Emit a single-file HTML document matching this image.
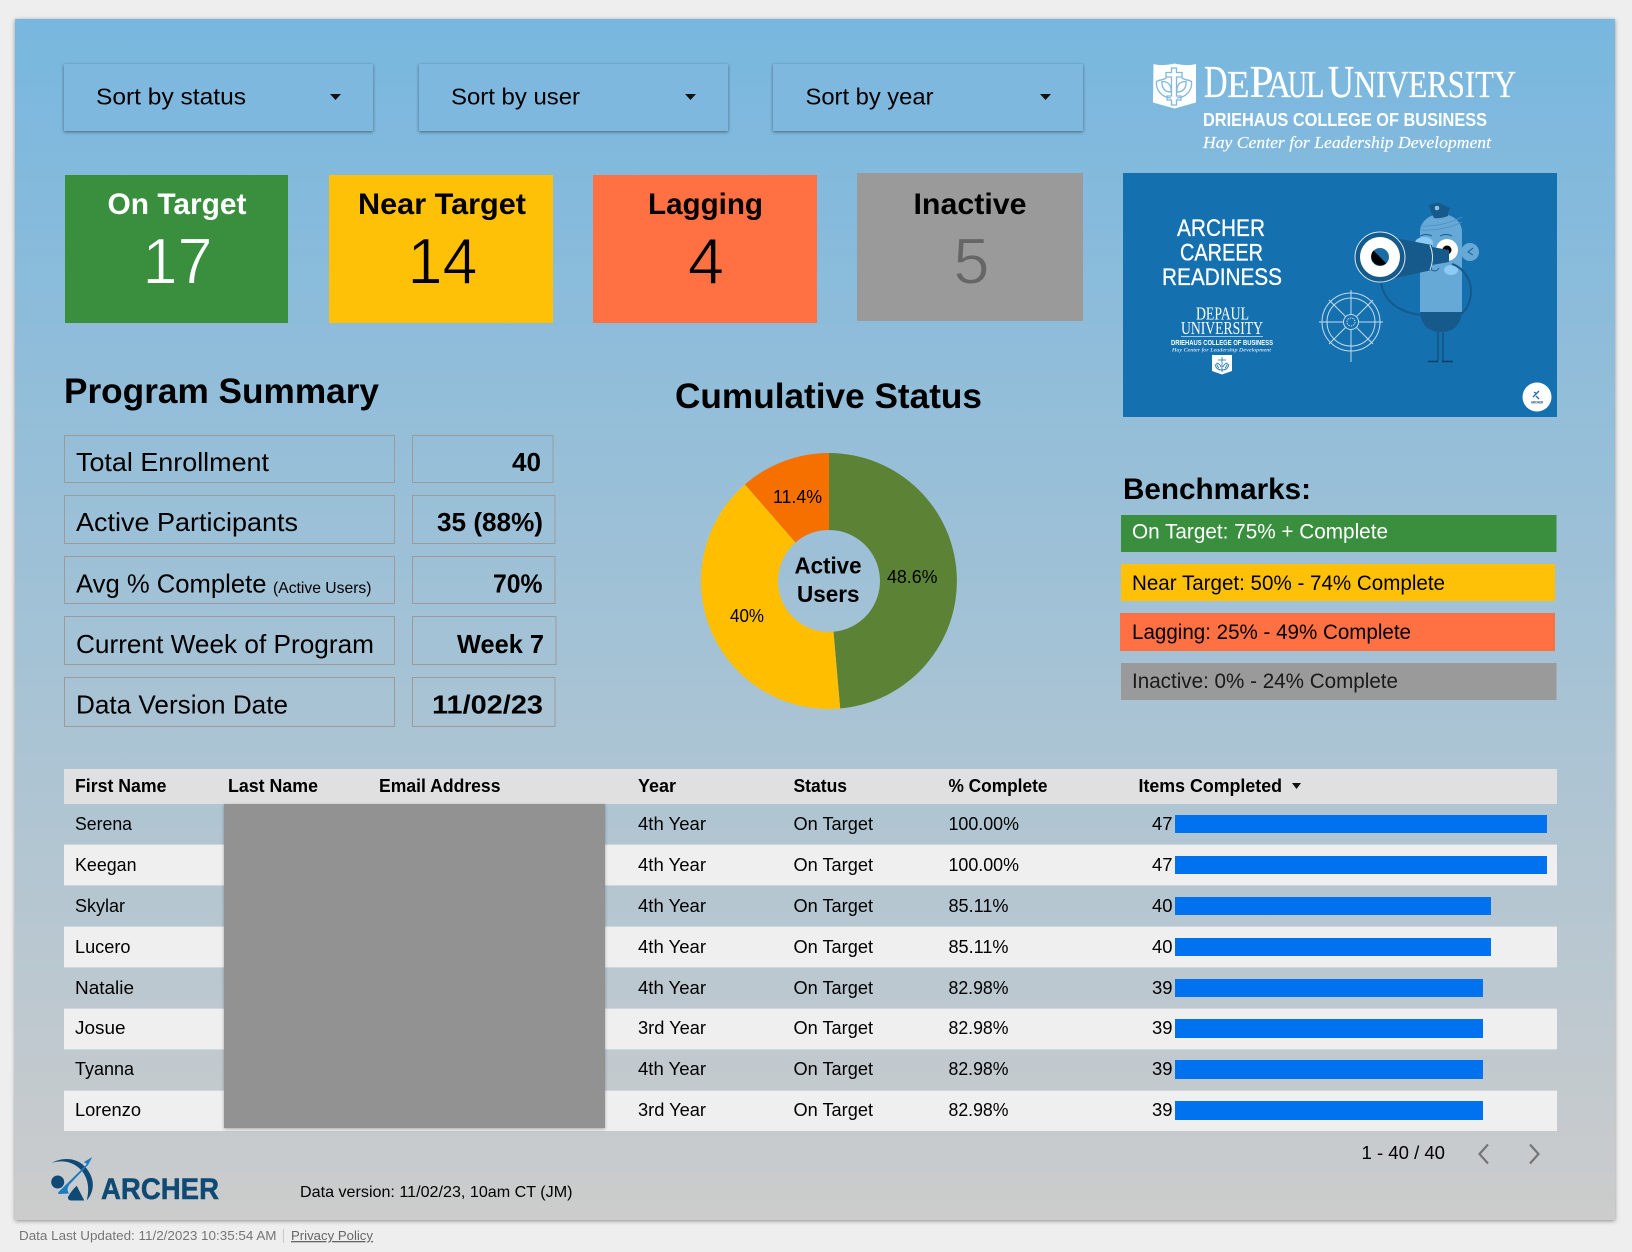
<!DOCTYPE html>
<html lang="en"><head><meta charset="utf-8"><title>Archer Career Readiness Dashboard</title>
<style>
html,body{margin:0;padding:0;background:#eee;width:1632px;height:1252px;overflow:hidden}
svg{display:block;position:absolute;left:0;top:0}
text{font-family:"Liberation Sans",Arial,sans-serif;fill:#000}
.b{font-weight:700}
.dd{font-size:23px}
.ct{font-size:30px;font-weight:700}
.cn{font-size:65px;text-anchor:middle;stroke-width:1px}
.l{font-size:26px}.v{font-size:26px;font-weight:700}
.h{font-size:18px;font-weight:700}.t{font-size:18px}
.bm{font-size:21px}
.s{font-family:"Liberation Serif",serif;fill:#fff}
.w{fill:#fff}
.lg{font-family:"Liberation Serif",serif;fill:#fff;stroke:#fff;stroke-width:.3px}
</style></head><body>
<svg width="1632" height="1252" viewBox="0 0 1632 1252" xmlns="http://www.w3.org/2000/svg">
<defs><linearGradient id="g" x1="0" y1="0" x2="0" y2="1"><stop offset="0" stop-color="#78b7df"/><stop offset="1" stop-color="#cccccc"/></linearGradient></defs>
<rect x="15" y="19" width="1600" height="1201" fill="url(#g)" style="filter:drop-shadow(0 1px 2px rgba(0,0,0,.4))"/>

<!-- dropdowns -->
<g fill="#7fb8de" style="filter:drop-shadow(0 1px 1.5px rgba(0,0,0,.45))">
<rect x="64" y="64" width="309" height="67"/><rect x="419" y="64" width="309" height="67"/><rect x="773" y="64" width="310" height="67"/>
</g>
<text class="dd" x="96" y="104.700" textLength="150" lengthAdjust="spacingAndGlyphs">Sort by status</text>
<text class="dd" x="451" y="104.700" textLength="129" lengthAdjust="spacingAndGlyphs">Sort by user</text>
<text class="dd" x="805.500" y="104.700" textLength="128" lengthAdjust="spacingAndGlyphs">Sort by year</text>
<path d="M330 94h11l-5.500 6zM685 94h11l-5.500 6zM1040 94h11l-5.500 6z" fill="#111"/>

<!-- DePaul logo -->
<path d="M1153.500 64q5 1.500 11 1t10-1.500q4 1 10 1.500t11.500-1v38.500l-21.500 6-21.500-6z" fill="#fff"/>
<g fill="none" stroke="#80b9de" stroke-width="1.300">
<path d="M1171.500 68h5v4.500h5.500v4.500h-5.500v19h4.500v4h-4.500v5h-5v-5h-4.500v-4h4.500v-19h-5.500v-4.500h5.500z"/>
<path d="M1171 92c-7 0-9.500-5-9-10.500 6 0 10 3.500 9 10.500zM1177 92c7 0 9.500-5 9-10.500-6 0-10 3.500-9 10.500z"/>
<path d="M1166.500 78c-3 1-5 2.500-6.500 2l-3.500 1.500c-1 8 5 16 14.500 16.500M1181.500 78c3 1 5 2.500 6.500 2l3.500 1.500c1 8-5 16-14.500 16.500"/>
</g>
<text class="lg" x="1204" y="97" font-size="45" textLength="23.500" lengthAdjust="spacingAndGlyphs">D</text>
<text class="lg" x="1227" y="97" font-size="38" textLength="22.500" lengthAdjust="spacingAndGlyphs">E</text>
<text class="lg" x="1249.500" y="97" font-size="45" textLength="24" lengthAdjust="spacingAndGlyphs">P</text>
<text class="lg" x="1267" y="97" font-size="38" textLength="24" lengthAdjust="spacingAndGlyphs">A</text>
<text class="lg" x="1288" y="97" font-size="38" textLength="19" lengthAdjust="spacingAndGlyphs">U</text>
<text class="lg" x="1306" y="97" font-size="38" textLength="18.500" lengthAdjust="spacingAndGlyphs">L</text>
<text class="lg" x="1328" y="97" font-size="45" textLength="26" lengthAdjust="spacingAndGlyphs">U</text>
<text class="lg" x="1354" y="97" font-size="38" textLength="162" lengthAdjust="spacingAndGlyphs">NIVERSITY</text>
<text class="w b" x="1203" y="126" font-size="18" textLength="284" lengthAdjust="spacingAndGlyphs">DRIEHAUS COLLEGE OF BUSINESS</text>
<text class="lg" x="1203" y="148" font-size="16.500" font-style="italic" textLength="288" lengthAdjust="spacingAndGlyphs" style="stroke-width:.15px">Hay Center for Leadership Development</text>

<!-- status cards -->
<rect x="65" y="175" width="223" height="148" fill="#3a8f3f"/>
<rect x="329" y="175" width="224" height="148" fill="#ffc107"/>
<rect x="593" y="175" width="224" height="148" fill="#ff7043"/>
<rect x="857" y="173" width="226" height="148" fill="#9a9a9a"/>
<text class="ct w" x="107.500" y="214" textLength="139" lengthAdjust="spacingAndGlyphs">On Target</text>
<text class="ct" x="358" y="214" textLength="168" lengthAdjust="spacingAndGlyphs">Near Target</text>
<text class="ct" x="648" y="214" textLength="115" lengthAdjust="spacingAndGlyphs">Lagging</text>
<text class="ct" x="913.500" y="214" textLength="113" lengthAdjust="spacingAndGlyphs">Inactive</text>
<text class="cn" x="177.500" y="283.500" textLength="70" lengthAdjust="spacingAndGlyphs" style="fill:#fff;stroke:#3a8f3f">17</text>
<text class="cn" x="442.500" y="283.500" textLength="70" lengthAdjust="spacingAndGlyphs" style="stroke:#ffc107">14</text>
<text class="cn" x="706" y="283.500" style="stroke:#ff7043">4</text>
<text class="cn" x="971.500" y="283.500" style="fill:#666;stroke:#9a9a9a">5</text>

<!-- banner -->
<rect x="1123" y="173" width="434" height="244" fill="#1570b0"/>
<g style="stroke:#fff;stroke-width:.3px">
<text class="w" x="1177" y="236" font-size="24" textLength="88" lengthAdjust="spacingAndGlyphs">ARCHER</text>
<text class="w" x="1180" y="260.500" font-size="24" textLength="83" lengthAdjust="spacingAndGlyphs">CAREER</text>
<text class="w" x="1162" y="285" font-size="24" textLength="120" lengthAdjust="spacingAndGlyphs">READINESS</text>
</g>
<text class="s" x="1196" y="319.500" font-size="18" textLength="53" lengthAdjust="spacingAndGlyphs">DEPAUL</text>
<text class="s" x="1181" y="334" font-size="18" textLength="82" lengthAdjust="spacingAndGlyphs">UNIVERSITY</text>
<path d="M1181 336.500h82" stroke="#cfe2ef" stroke-width=".7"/>
<text class="w b" x="1171" y="345" font-size="7" textLength="102" lengthAdjust="spacingAndGlyphs">DRIEHAUS COLLEGE OF BUSINESS</text>
<text class="s" x="1172" y="351.500" font-size="5.500" font-style="italic" textLength="99" lengthAdjust="spacingAndGlyphs">Hay Center for Leadership Development</text>
<path d="M1212 355h20v16l-10 3.500-10-3.500z" fill="#fff"/>
<path d="M1222 357v15M1218 360h8M1215 364q1 6 7 6t7-6M1219 368q-3-3-2-5 3 1 4 4M1225 368q3-3 2-5-3 1-4 4" fill="none" stroke="#1570b0" stroke-width=".8"/>
<circle cx="1537" cy="397" r="14.500" fill="#fff"/>
<path d="M1533 397l6-6M1534 392l3 2M1536 396l3 3" stroke="#1a6aa8" stroke-width="1.300" fill="none"/>
<text x="1531" y="403.500" font-size="3.500" textLength="12" lengthAdjust="spacingAndGlyphs" style="fill:#0f4a75;font-weight:700">ARCHER</text>

<!-- wheel -->
<g fill="none" stroke="#c3dbec" stroke-width="1">
<circle cx="1351" cy="322" r="29"/><circle cx="1351" cy="322" r="24"/><circle cx="1351" cy="322" r="7.500"/><circle cx="1351" cy="322" r="4" stroke-dasharray="1.500 1"/>
<path d="M1351 290v24.500M1351 329.500v32.500M1319 322h24.500M1358.500 322h24.500M1329 300l16.500 16.500M1356.500 327.500l16.500 16.500M1373 300l-16.500 16.500M1345.500 327.500l-16.500 16.500"/>
</g>
<!-- character -->
<path d="M1420 312V232C1420 221 1430 214 1441 214S1462 221 1462 232V312Z" fill="#67a9d6"/>
<path d="M1420 312h42q-2 20-21 20t-21-20z" fill="#155a8a"/>
<circle cx="1470" cy="252" r="9" fill="#67a9d6"/>
<path d="M1473 248l-5 4 5 3" fill="none" stroke="#155a8a" stroke-width="1"/>
<path d="M1429 205l9-2.500 12 5.500-2 5v3q-8 3-14 2l-3-6z" fill="#155a8a"/><circle cx="1437" cy="208" r="2.300" fill="#8fc2e4"/>
<path d="M1420 226q22 1 42-9M1421 230q22 1 41-8" fill="none" stroke="#4f92c2" stroke-width=".7"/>
<ellipse cx="1424" cy="243" rx="9" ry="6" fill="#8ccbf3"/><ellipse cx="1451" cy="270" rx="7" ry="5" fill="#8ccbf3"/>
<circle cx="1447" cy="250" r="11" fill="#fff"/><circle cx="1447" cy="250" r="4.500" fill="#000"/>
<path d="M1430 268q5 6 9 0M1420 236q6-3 12 0M1440 236q6-3 12 0" fill="none" stroke="#155a8a" stroke-width=".9"/>
<path d="M1381 283Q1386 310 1420 315M1452 264C1470 270 1479 295 1462 314" fill="none" stroke="#155a8a" stroke-width="2"/>
<path d="M1395 238l37 7v25l-37 8z" fill="#155a8a"/>
<path d="M1432 247l17 3v12l-17 3z" fill="#155a8a"/>
<path d="M1430 245q5 12 0 25" fill="none" stroke="#d9e9f4" stroke-width="1"/>
<circle cx="1380" cy="257" r="25" fill="#155a8a" stroke="#d9e9f4" stroke-width="1"/>
<circle cx="1380" cy="257" r="20" fill="#fff"/>
<circle cx="1380" cy="257" r="9" fill="#1c6ca4"/>
<path d="M1373.500 250.500a9 9 0 0 0 12.700 12.700z" fill="#000"/>
<path d="M1438 332v29M1443 332v29" stroke="#155a8a" stroke-width="2"/>
<path d="M1428 361.500h10M1442 361.500h11" stroke="#0c3c60" stroke-width="1.600"/>

<!-- Program Summary -->
<text class="b" x="64" y="403" font-size="35" textLength="315" lengthAdjust="spacingAndGlyphs">Program Summary</text>
<g fill="none" stroke="#9b9b9b" stroke-width="1">
<rect x="64.500" y="435.500" width="330" height="47"/><rect x="64.500" y="495.500" width="330" height="48"/><rect x="64.500" y="556.500" width="330" height="47"/><rect x="64.500" y="616.500" width="330" height="48"/><rect x="64.500" y="677.500" width="330" height="49"/>
<rect x="412.500" y="435.500" width="140.500" height="47"/><rect x="412.500" y="495.500" width="142.500" height="48"/><rect x="412.500" y="556.500" width="142.500" height="47"/><rect x="412.500" y="616.500" width="143.500" height="48"/><rect x="412.500" y="677.500" width="142.500" height="49"/>
</g>
<text class="l" x="76" y="471" textLength="193" lengthAdjust="spacingAndGlyphs">Total Enrollment</text>
<text class="l" x="76" y="531" textLength="222" lengthAdjust="spacingAndGlyphs">Active Participants</text>
<text class="l" x="76" y="592.700" textLength="190.500" lengthAdjust="spacingAndGlyphs">Avg % Complete</text>
<text x="273" y="593" font-size="16" textLength="98.500" lengthAdjust="spacingAndGlyphs">(Active Users)</text>
<text class="l" x="76" y="653" textLength="298" lengthAdjust="spacingAndGlyphs">Current Week of Program</text>
<text class="l" x="76" y="713.700" textLength="212" lengthAdjust="spacingAndGlyphs">Data Version Date</text>
<text class="v" x="512" y="471" textLength="29" lengthAdjust="spacingAndGlyphs">40</text>
<text class="v" x="437" y="531" textLength="106" lengthAdjust="spacingAndGlyphs">35 (88%)</text>
<text class="v" x="493" y="592.700" textLength="49.500" lengthAdjust="spacingAndGlyphs">70%</text>
<text class="v" x="457" y="653" textLength="87" lengthAdjust="spacingAndGlyphs">Week 7</text>
<text class="v" x="432" y="713.700" textLength="111" lengthAdjust="spacingAndGlyphs">11/02/23</text>

<!-- Cumulative Status -->
<text class="b" x="675" y="408" font-size="35" textLength="307" lengthAdjust="spacingAndGlyphs">Cumulative Status</text>
<path d="M829 453A128 128 0 0 1 840.200 708.500L833.500 631.800A51 51 0 0 0 829 530z" fill="#5b8235"/>
<path d="M840.200 708.500A128 128 0 0 1 744.950 484.400L795.500 542.500A51 51 0 0 0 833.500 631.800z" fill="#ffbf00"/>
<path d="M744.950 484.400A128 128 0 0 1 829 453V530A51 51 0 0 0 795.500 542.500z" fill="#f67000"/>
<text class="b" x="794.500" y="573.500" font-size="23" textLength="67" lengthAdjust="spacingAndGlyphs">Active</text>
<text class="b" x="797" y="602" font-size="23" textLength="62.500" lengthAdjust="spacingAndGlyphs">Users</text>
<text x="887" y="583" font-size="18" textLength="50.500" lengthAdjust="spacingAndGlyphs">48.6%</text>
<text x="730" y="622" font-size="18" textLength="34" lengthAdjust="spacingAndGlyphs">40%</text>
<text x="773" y="503" font-size="18" textLength="49" lengthAdjust="spacingAndGlyphs">11.4%</text>

<!-- Benchmarks -->
<text class="b" x="1123" y="499" font-size="30" textLength="188" lengthAdjust="spacingAndGlyphs">Benchmarks:</text>
<rect x="1121" y="515" width="435.500" height="37" fill="#3a8f3f"/>
<rect x="1121" y="564" width="434" height="37" fill="#ffc107"/>
<rect x="1120" y="613" width="435" height="38" fill="#ff7043"/>
<rect x="1121" y="663" width="435.500" height="37" fill="#9a9a9a"/>
<text class="bm w" x="1132" y="538.600" textLength="256" lengthAdjust="spacingAndGlyphs">On Target: 75% + Complete</text>
<text class="bm" x="1132" y="590" textLength="313" lengthAdjust="spacingAndGlyphs">Near Target: 50% - 74% Complete</text>
<text class="bm" x="1132" y="639" textLength="279" lengthAdjust="spacingAndGlyphs">Lagging: 25% - 49% Complete</text>
<text class="bm" x="1132" y="688" textLength="266" lengthAdjust="spacingAndGlyphs" style="fill:#1a1a1a">Inactive: 0% - 24% Complete</text>

<!-- table -->
<rect x="64" y="769" width="1493" height="35" fill="#e0e0e0"/>
<g fill="#efefef">
<rect x="64" y="845" width="1493" height="40"/><rect x="64" y="927" width="1493" height="40"/><rect x="64" y="1009" width="1493" height="40"/><rect x="64" y="1091" width="1493" height="40"/>
</g>
<g fill="#d7dde1" opacity=".7"><rect x="64" y="844" width="1493" height="1"/><rect x="64" y="885" width="1493" height="1"/><rect x="64" y="926" width="1493" height="1"/><rect x="64" y="967" width="1493" height="1"/><rect x="64" y="1008" width="1493" height="1"/><rect x="64" y="1049" width="1493" height="1"/><rect x="64" y="1090" width="1493" height="1"/></g>
<rect x="224" y="804" width="381" height="324" fill="#929292" style="filter:drop-shadow(0 1px 1.500px rgba(0,0,0,.3))"/>
<text class="h" x="75" y="792" textLength="91.500" lengthAdjust="spacingAndGlyphs">First Name</text>
<text class="h" x="228" y="792" textLength="90" lengthAdjust="spacingAndGlyphs">Last Name</text>
<text class="h" x="379" y="792" textLength="121.500" lengthAdjust="spacingAndGlyphs">Email Address</text>
<text class="h" x="638" y="792" textLength="38" lengthAdjust="spacingAndGlyphs">Year</text>
<text class="h" x="793.500" y="792" textLength="53.500" lengthAdjust="spacingAndGlyphs">Status</text>
<text class="h" x="948.500" y="792" textLength="99" lengthAdjust="spacingAndGlyphs">% Complete</text>
<text class="h" x="1138.500" y="792" textLength="143.500" lengthAdjust="spacingAndGlyphs">Items Completed</text>
<path d="M1292 783h9l-4.500 6z" fill="#111"/>

<text class="t" x="75" y="830" textLength="57" lengthAdjust="spacingAndGlyphs">Serena</text>
<text class="t" x="75" y="871" textLength="61.500" lengthAdjust="spacingAndGlyphs">Keegan</text>
<text class="t" x="75" y="912" textLength="50" lengthAdjust="spacingAndGlyphs">Skylar</text>
<text class="t" x="75" y="953" textLength="55.500" lengthAdjust="spacingAndGlyphs">Lucero</text>
<text class="t" x="75" y="994" textLength="59" lengthAdjust="spacingAndGlyphs">Natalie</text>
<text class="t" x="75" y="1034" textLength="50.500" lengthAdjust="spacingAndGlyphs">Josue</text>
<text class="t" x="75" y="1075" textLength="59" lengthAdjust="spacingAndGlyphs">Tyanna</text>
<text class="t" x="75" y="1116" textLength="66" lengthAdjust="spacingAndGlyphs">Lorenzo</text>

<text class="t" x="638" y="830" textLength="68" lengthAdjust="spacingAndGlyphs">4th Year</text>
<text class="t" x="638" y="871" textLength="68" lengthAdjust="spacingAndGlyphs">4th Year</text>
<text class="t" x="638" y="912" textLength="68" lengthAdjust="spacingAndGlyphs">4th Year</text>
<text class="t" x="638" y="953" textLength="68" lengthAdjust="spacingAndGlyphs">4th Year</text>
<text class="t" x="638" y="994" textLength="68" lengthAdjust="spacingAndGlyphs">4th Year</text>
<text class="t" x="638" y="1034" textLength="68" lengthAdjust="spacingAndGlyphs">3rd Year</text>
<text class="t" x="638" y="1075" textLength="68" lengthAdjust="spacingAndGlyphs">4th Year</text>
<text class="t" x="638" y="1116" textLength="68" lengthAdjust="spacingAndGlyphs">3rd Year</text>

<text class="t" x="793.500" y="830" textLength="79.500" lengthAdjust="spacingAndGlyphs">On Target</text>
<text class="t" x="793.500" y="871" textLength="79.500" lengthAdjust="spacingAndGlyphs">On Target</text>
<text class="t" x="793.500" y="912" textLength="79.500" lengthAdjust="spacingAndGlyphs">On Target</text>
<text class="t" x="793.500" y="953" textLength="79.500" lengthAdjust="spacingAndGlyphs">On Target</text>
<text class="t" x="793.500" y="994" textLength="79.500" lengthAdjust="spacingAndGlyphs">On Target</text>
<text class="t" x="793.500" y="1034" textLength="79.500" lengthAdjust="spacingAndGlyphs">On Target</text>
<text class="t" x="793.500" y="1075" textLength="79.500" lengthAdjust="spacingAndGlyphs">On Target</text>
<text class="t" x="793.500" y="1116" textLength="79.500" lengthAdjust="spacingAndGlyphs">On Target</text>

<text class="t" x="948.500" y="830" textLength="70.500" lengthAdjust="spacingAndGlyphs">100.00%</text>
<text class="t" x="948.500" y="871" textLength="70.500" lengthAdjust="spacingAndGlyphs">100.00%</text>
<text class="t" x="948.500" y="912" textLength="60" lengthAdjust="spacingAndGlyphs">85.11%</text>
<text class="t" x="948.500" y="953" textLength="60" lengthAdjust="spacingAndGlyphs">85.11%</text>
<text class="t" x="948.500" y="994" textLength="60" lengthAdjust="spacingAndGlyphs">82.98%</text>
<text class="t" x="948.500" y="1034" textLength="60" lengthAdjust="spacingAndGlyphs">82.98%</text>
<text class="t" x="948.500" y="1075" textLength="60" lengthAdjust="spacingAndGlyphs">82.98%</text>
<text class="t" x="948.500" y="1116" textLength="60" lengthAdjust="spacingAndGlyphs">82.98%</text>

<text class="t" x="1152" y="830" textLength="20.500" lengthAdjust="spacingAndGlyphs">47</text>
<text class="t" x="1152" y="871" textLength="20.500" lengthAdjust="spacingAndGlyphs">47</text>
<text class="t" x="1152" y="912" textLength="20.500" lengthAdjust="spacingAndGlyphs">40</text>
<text class="t" x="1152" y="953" textLength="20.500" lengthAdjust="spacingAndGlyphs">40</text>
<text class="t" x="1152" y="994" textLength="20.500" lengthAdjust="spacingAndGlyphs">39</text>
<text class="t" x="1152" y="1034" textLength="20.500" lengthAdjust="spacingAndGlyphs">39</text>
<text class="t" x="1152" y="1075" textLength="20.500" lengthAdjust="spacingAndGlyphs">39</text>
<text class="t" x="1152" y="1116" textLength="20.500" lengthAdjust="spacingAndGlyphs">39</text>

<g fill="#0072f0">
<rect x="1175" y="815" width="372" height="18"/><rect x="1175" y="856" width="372" height="18"/><rect x="1175" y="897" width="316" height="18"/><rect x="1175" y="938" width="316" height="18"/><rect x="1175" y="979" width="308" height="18"/><rect x="1175" y="1019" width="308" height="19"/><rect x="1175" y="1060" width="308" height="19"/><rect x="1175" y="1101" width="308" height="19"/>
</g>

<!-- pagination -->
<text class="t" x="1361.500" y="1159" textLength="83.500" lengthAdjust="spacingAndGlyphs">1 - 40 / 40</text>
<path d="M1488 1144.500l-8.500 9.500 8.500 9.500M1530 1144.500l8.500 9.500-8.500 9.500" fill="none" stroke="#757575" stroke-width="2.200"/>

<!-- Archer logo -->
<path d="M51.700 1163C60 1158 73 1157 82 1164 95 1175 96 1190 86.700 1200.500 90 1188 88 1176 79 1168 71 1161 61 1160 51.700 1163z" fill="#0f4a75"/>
<circle cx="57.700" cy="1182" r="6.500" fill="#0f4a75"/>
<path d="M92.300 1157L84 1162l3 2-28.500 28q-1.500 2 1.500 2l9-.500q-3-3.500 0-8.500L88 1165z" fill="#1a7cc4"/>
<path d="M76.700 1185.700L84.300 1200.500H71q-3.500-.5-3-3.500 3-6 8.700-11.300z" fill="#0f4a75"/>
<text class="b" x="101" y="1199" font-size="30" textLength="118" lengthAdjust="spacingAndGlyphs" style="fill:#0f4a75;stroke:#0f4a75;stroke-width:.5px">ARCHER</text>
<text x="300" y="1197" font-size="16" textLength="272.500" lengthAdjust="spacingAndGlyphs">Data version: 11/02/23, 10am CT (JM)</text>

<!-- footer -->
<text x="19" y="1240" font-size="13" textLength="257.500" lengthAdjust="spacingAndGlyphs" style="fill:#757575">Data Last Updated: 11/2/2023 10:35:54 AM</text>
<path d="M283.500 1229v14" stroke="#c8c8c8" stroke-width="1"/>
<text x="291" y="1240" font-size="13" textLength="82" lengthAdjust="spacingAndGlyphs" text-decoration="underline" style="fill:#666">Privacy Policy</text>
</svg>
</body></html>
